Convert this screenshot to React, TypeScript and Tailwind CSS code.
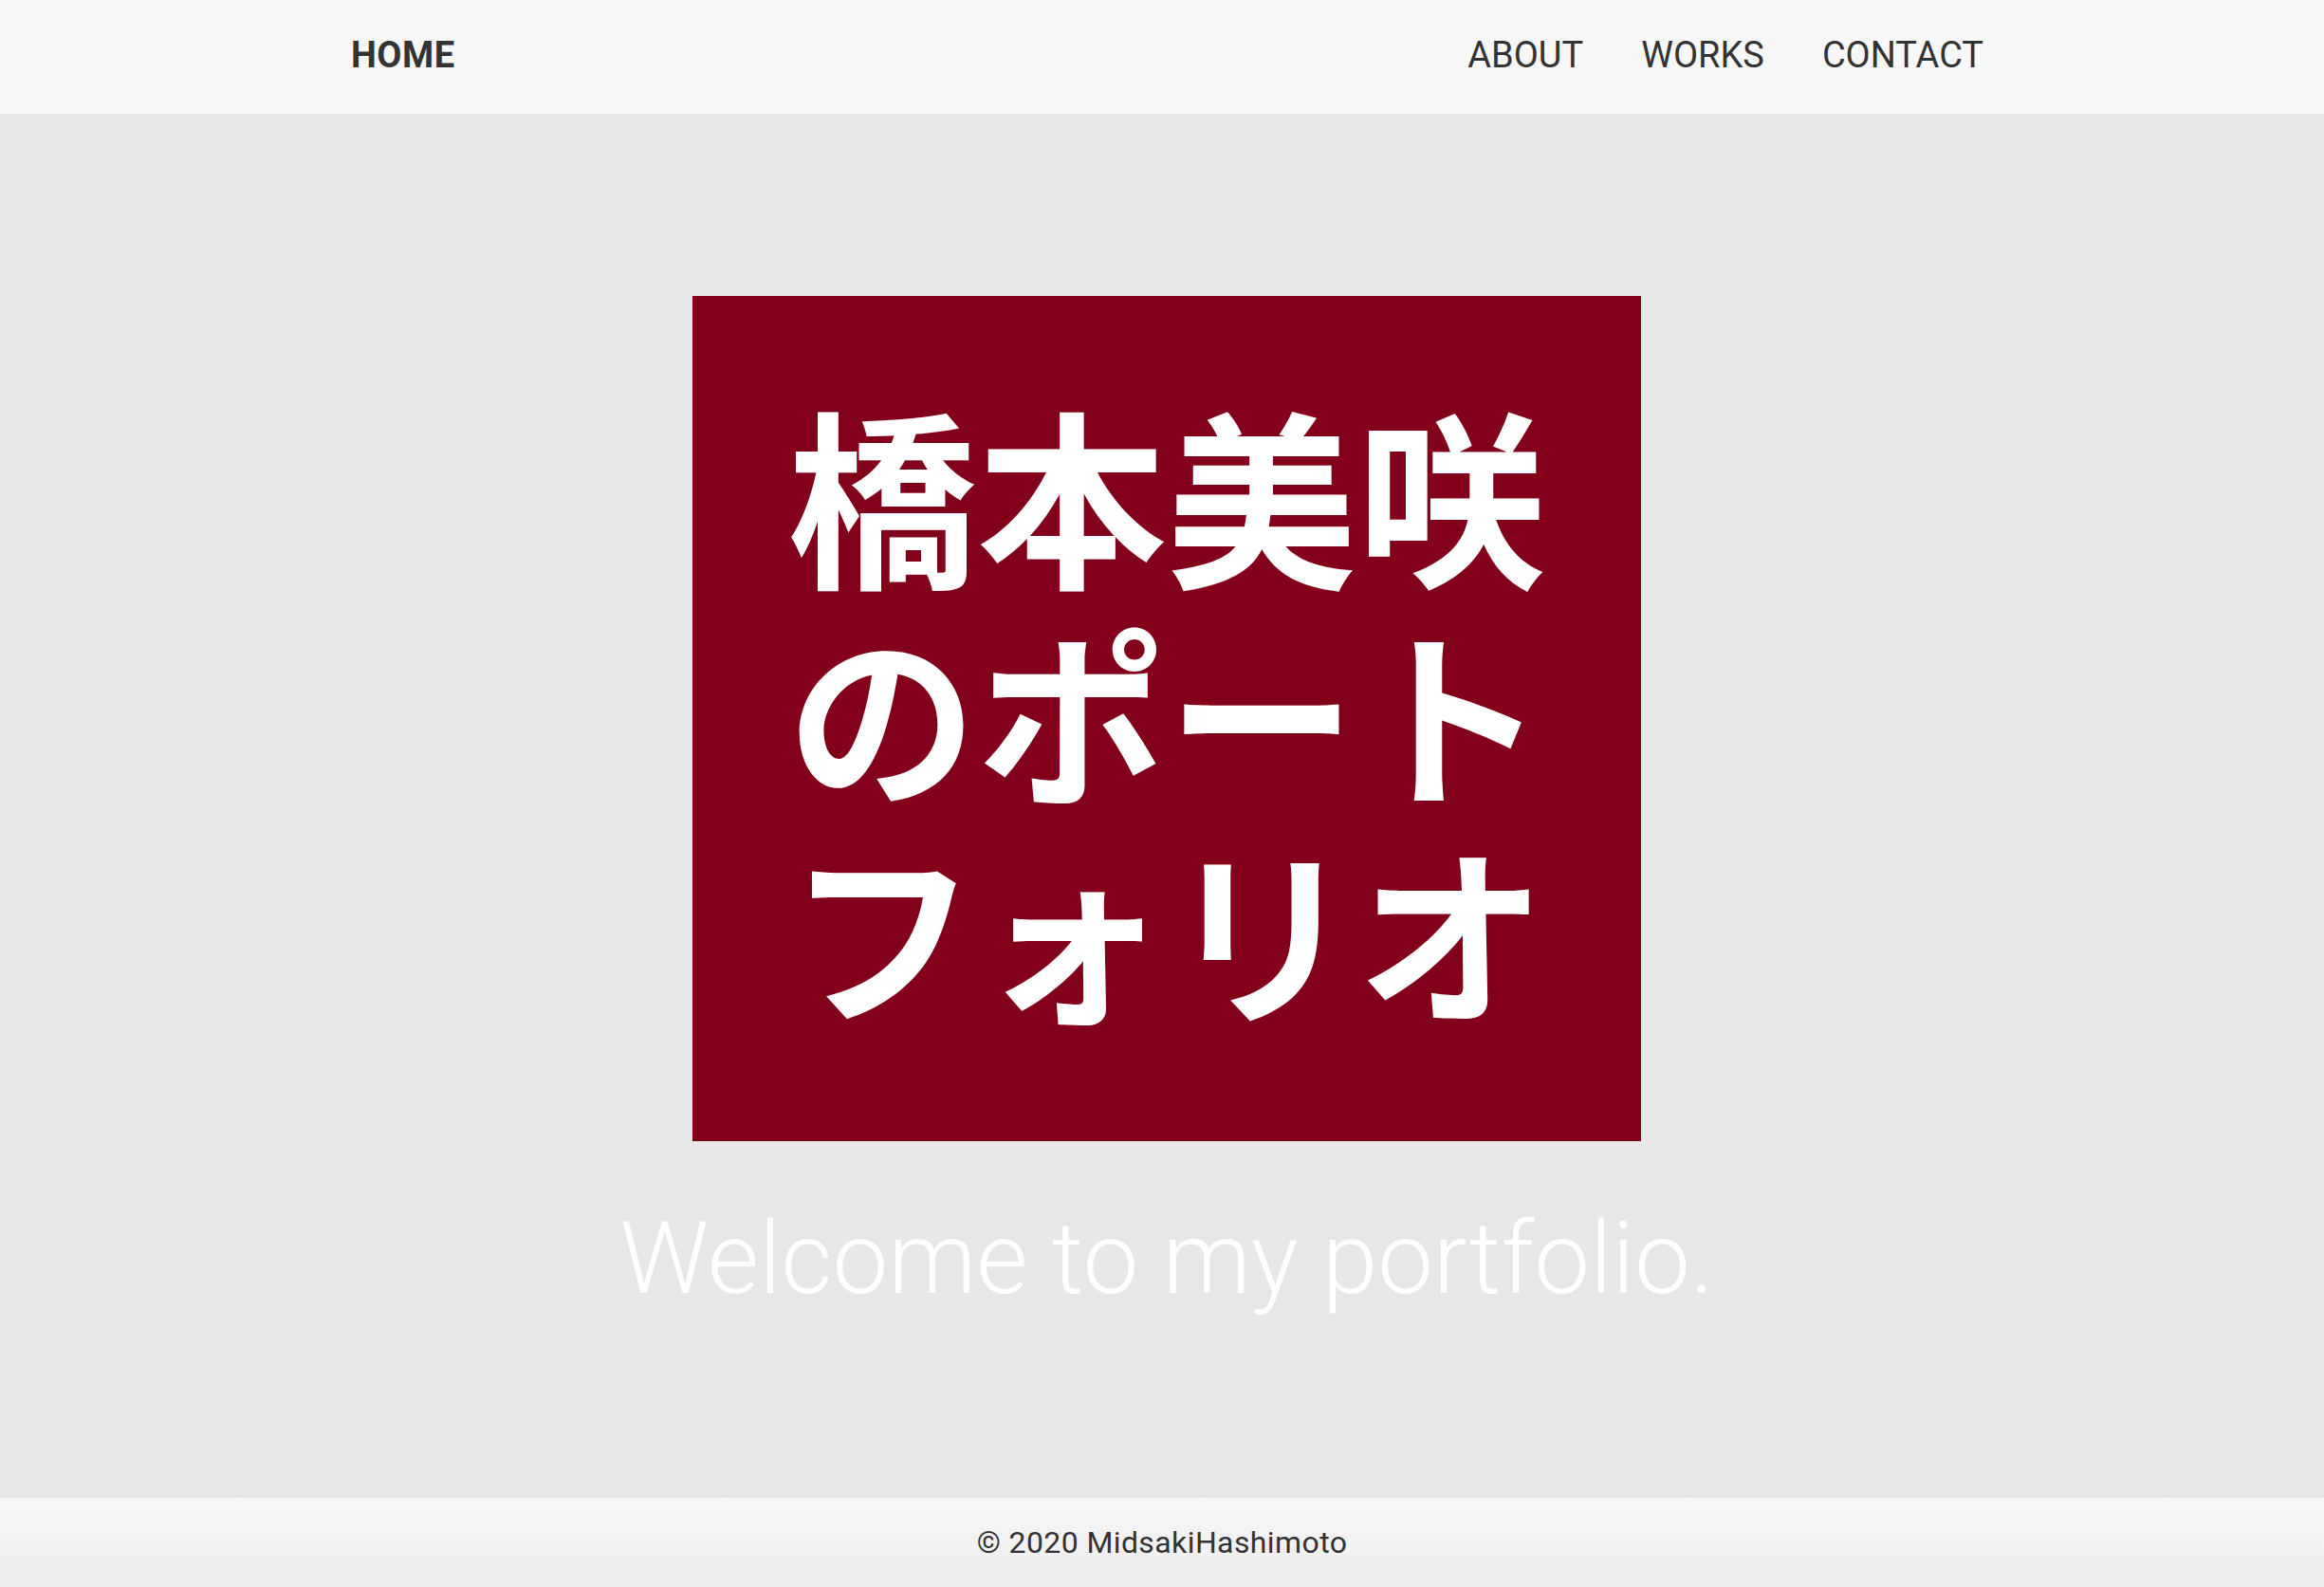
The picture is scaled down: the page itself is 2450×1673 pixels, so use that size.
import React from "react";

export default function App() {
  const latin = { fontFamily: "Roboto, 'Noto Sans', sans-serif" };
  return (
    <div className="flex min-h-[1673px] w-full flex-col bg-[#e7e7e7]" style={latin}>
      <header className="flex h-[120px] items-center justify-between bg-[#f7f7f7] pb-[4px] pl-[370px] pr-[359px] text-[#333333]">
        <a className="text-[38px] font-bold tracking-[0.5px]">HOME</a>
        <nav className="flex items-center gap-[61px] text-[38px] font-normal">
          <a>ABOUT</a>
          <a>WORKS</a>
          <a>CONTACT</a>
        </nav>
      </header>

      <main className="flex h-[1459px] flex-col items-center pl-[10px] pt-[192px]">
        <div className="flex h-[891px] w-[1000px] flex-col items-center justify-center bg-[#83001a] pb-[20px]">
          <h1
            className="text-center text-[200px] font-bold leading-[230px] text-white"
            style={{ fontFamily: "'Noto Sans CJK JP', sans-serif" }}
          >
            橋本美咲
            <br />
            のポート
            <br />
            フォリオ
          </h1>
        </div>
        <p className="mt-[65px] text-[105px] font-light leading-[120px] tracking-[-0.1px] text-white">
          Welcome to my portfolio.
        </p>
      </main>

      <footer className="flex h-[94px] items-center justify-center bg-gradient-to-b from-[#f7f7f7] to-[#ececec] text-[32px] tracking-[0.4px] text-[#333333]">
        <p>© 2020 MidsakiHashimoto</p>
      </footer>
    </div>
  );
}
